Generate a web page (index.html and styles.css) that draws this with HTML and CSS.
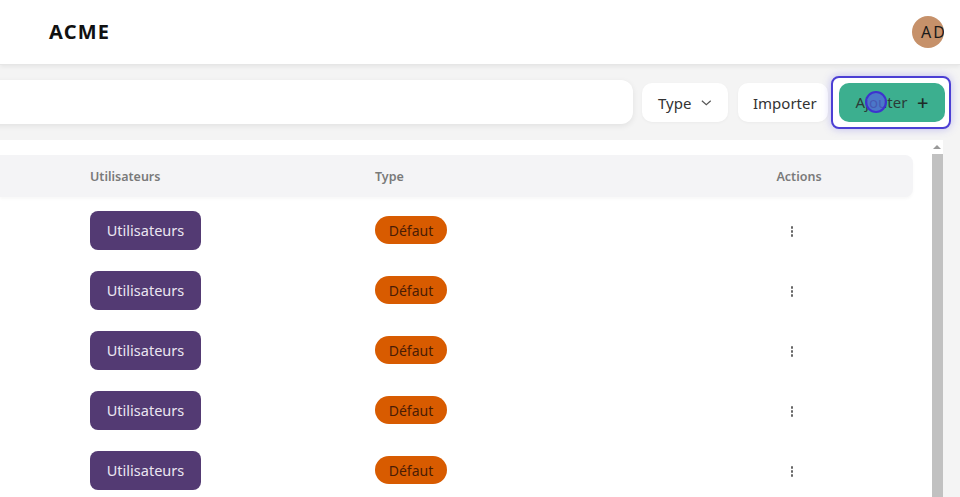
FILE: index.html
```html
<!DOCTYPE html>
<html lang="fr">
<head>
<meta charset="utf-8">
<title>ACME</title>
<link rel="stylesheet" href="styles.css">
</head>
<body>
<header class="topbar">
  <div class="brand">ACME</div>
  <div class="avatar"><span>AD</span></div>
</header>
<section class="toolbar">
  <div class="search"></div>
  <button class="btn btn-light btn-type">Type
    <svg class="chev" width="12" height="8" viewBox="0 0 12 8"><path d="M1 1.5 L6 6 L11 1.5" fill="none" stroke="#555" stroke-width="1.3"/></svg>
  </button>
  <button class="btn btn-light btn-import">Importer</button>
  <div class="focus-ring">
    <button class="btn btn-add">Ajouter <span class="plus">+</span></button>
    <span class="cursor"></span>
  </div>
</section>
<section class="panel">
  <div class="table">
    <div class="thead">
      <div></div>
      <div>Utilisateurs</div>
      <div>Type</div>
      <div class="c-actions">Actions</div>
    </div>
    <div class="row"><div></div><div><span class="chip-users">Utilisateurs</span></div><div><span class="chip-type">Défaut</span></div><div class="c-actions"><span class="kebab"><i></i><i></i><i></i></span></div></div>
    <div class="row"><div></div><div><span class="chip-users">Utilisateurs</span></div><div><span class="chip-type">Défaut</span></div><div class="c-actions"><span class="kebab"><i></i><i></i><i></i></span></div></div>
    <div class="row"><div></div><div><span class="chip-users">Utilisateurs</span></div><div><span class="chip-type">Défaut</span></div><div class="c-actions"><span class="kebab"><i></i><i></i><i></i></span></div></div>
    <div class="row"><div></div><div><span class="chip-users">Utilisateurs</span></div><div><span class="chip-type">Défaut</span></div><div class="c-actions"><span class="kebab"><i></i><i></i><i></i></span></div></div>
    <div class="row"><div></div><div><span class="chip-users">Utilisateurs</span></div><div><span class="chip-type">Défaut</span></div><div class="c-actions"><span class="kebab"><i></i><i></i><i></i></span></div></div>
  </div>
  <div class="scrollbar">
    <div class="arrow"></div>
    <div class="thumb"></div>
  </div>
  <div class="side"></div>
</section>
</body>
</html>
```
FILE: styles.css
```css
* { box-sizing: border-box; }
html, body { margin: 0; height: 100%; overflow: hidden; }
body {
  font-family: "Noto Sans", "Open Sans", sans-serif;
  background: #f4f4f4;
  color: #333;
  display: flex;
  flex-direction: column;
}
.topbar {
  height: 65px;
  flex: none;
  background: #fff;
  display: flex;
  align-items: center;
  justify-content: space-between;
  padding: 0 16px 0 49px;
  border-bottom: 1px solid #e6e6e6;
  box-shadow: 0 2px 4px rgba(0,0,0,0.06);
  position: relative;
  z-index: 2;
}
.brand {
  font-weight: 700;
  font-size: 20px;
  letter-spacing: 1.2px;
  color: #111;
  margin-top: -1px;
}
.avatar {
  width: 32px;
  height: 32px;
  border-radius: 50%;
  background: #c6916a;
  overflow: hidden;
  display: flex;
  align-items: center;
  padding-left: 9px;
  font-size: 16px;
  letter-spacing: 2px;
  color: #1a1a1a;
  white-space: nowrap;
  margin-top: -1px;
}
.toolbar {
  height: 75px;
  flex: none;
  display: flex;
  align-items: center;
  padding: 0 9px 0 0;
}
.search {
  flex: 1;
  height: 44px;
  margin-left: -20px;
  margin-right: 9px;
  background: #fff;
  border-radius: 12px;
  box-shadow: 0 2px 6px rgba(0,0,0,0.08);
  margin-top: -1px;
}
.btn {
  font-family: inherit;
  font-size: 15px;
  border: none;
  height: 39px;
  border-radius: 10px;
  display: flex;
  align-items: center;
  cursor: pointer;
}
.btn-light {
  background: #fff;
  color: #333;
  padding: 0 16px;
  box-shadow: 0 1px 3px rgba(0,0,0,0.04);
}
.btn-type { gap: 10px; width: 86px; margin-right: 10px; }
.btn-import { width: 90px; padding-left: 15px; margin-right: 3px; }
.chev { margin-top: 1px; }
.focus-ring {
  position: relative;
  border: 2.5px solid #4c3fd4;
  border-radius: 8px;
  padding: 4.5px 4.5px 5.5px 5.5px;
  background: #fff;
  box-shadow: 0 0 8px rgba(90,80,230,0.35);
  margin-top: 0;
}
.btn-add {
  background: #3caf8f;
  color: #2b3b38;
  width: 106px;
  padding: 0 16px 0 17px;
  justify-content: space-between;
}
.plus { font-size: 20px; font-weight: 500; color: #1e2a27; }
.cursor {
  position: absolute;
  left: 32px;
  top: 13px;
  width: 22px;
  height: 22px;
  border-radius: 50%;
  border: 2px solid #3d32cf;
  background: rgba(80,100,220,0.75);
}
.panel {
  flex: 1;
  display: flex;
  background: #fff;
  min-height: 0;
}
.table {
  width: 931px;
  flex: none;
  padding: 15px 18px 0 0;
}
.thead, .row {
  display: grid;
  grid-template-columns: 90px 285px 325px 198px;
}
.thead {
  height: 42px;
  background: #f4f4f6;
  border-radius: 0 8px 8px 0;
  align-items: center;
  font-size: 12.5px;
  font-weight: 600;
  color: #7a7a7a;
  box-shadow: 0 2px 3px rgba(0,0,0,0.03);
}
.c-actions { text-align: center; }
.row {
  height: 60px;
  align-items: center;
}
.thead + .row { margin-top: 3px; }
.chip-users {
  display: inline-flex;
  align-items: center;
  justify-content: center;
  width: 111px;
  height: 39px;
  border-radius: 8px;
  background: #533a73;
  color: #ebe6f1;
  font-size: 14.5px;
}
.chip-type {
  display: inline-flex;
  align-items: center;
  justify-content: center;
  width: 72px;
  height: 28px;
  border-radius: 14px;
  background: #d85b00;
  color: #4a1c05;
  font-size: 14px;
}
.kebab {
  display: inline-flex;
  flex-direction: column;
  gap: 1.5px;
  margin-right: 14px;
  vertical-align: middle;
}
.kebab i {
  display: block;
  width: 2.5px;
  height: 2.5px;
  border-radius: 50%;
  background: #666;
}
.scrollbar {
  width: 12px;
  flex: none;
  display: flex;
  flex-direction: column;
  align-items: center;
  padding-top: 5px;
}
.arrow {
  width: 0;
  height: 0;
  border-left: 4px solid transparent;
  border-right: 4px solid transparent;
  border-bottom: 4px solid #999;
  margin-bottom: 5px;
}
.thumb {
  width: 11px;
  flex: 1;
  background: #c1c1c1;
}
.side {
  flex: 1;
  background: #f4f4f4;
}
```
